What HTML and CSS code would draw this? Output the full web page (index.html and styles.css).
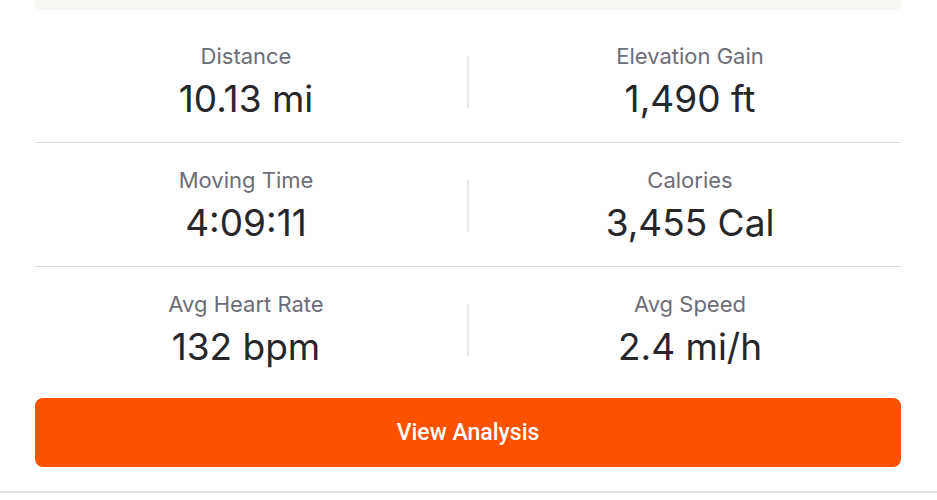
FILE: index.html
```html
<!DOCTYPE html>
<html>
<head>
<meta charset="utf-8">
<link rel="stylesheet" href="styles.css">
</head>
<body>
<div class="card">
  <div class="top-panel"></div>
  <div class="stats">
    <div class="row first">
      <div class="stat"><div class="label">Distance</div><div class="value">10.13 mi</div></div>
      <div class="divider"></div>
      <div class="stat"><div class="label">Elevation Gain</div><div class="value">1,490 ft</div></div>
    </div>
    <div class="row">
      <div class="stat"><div class="label">Moving Time</div><div class="value">4:09:11</div></div>
      <div class="divider"></div>
      <div class="stat"><div class="label">Calories</div><div class="value">3,455 Cal</div></div>
    </div>
    <div class="row last">
      <div class="stat"><div class="label">Avg Heart Rate</div><div class="value">132 bpm</div></div>
      <div class="divider"></div>
      <div class="stat"><div class="label">Avg Speed</div><div class="value">2.4 mi/h</div></div>
    </div>
  </div>
  <button class="btn">View Analysis</button>
</div>
<div class="bottom-line"></div>
</body>
</html>
```
FILE: styles.css
```css
html, body {
  margin: 0;
  padding: 0;
  background: #ffffff;
}
body {
  font-family: Inter, "Noto Sans", sans-serif;
  width: 937px;
  height: 500px;
  overflow: hidden;
}
.card {
  padding: 0 36px 0 35px;
  display: flex;
  flex-direction: column;
}
.top-panel {
  height: 10px;
  background: #f7f6f3;
  border-radius: 0 0 6px 6px;
}
.stats {
  display: flex;
  flex-direction: column;
  padding-top: 9px;
}
.row {
  display: grid;
  grid-template-columns: 1fr 2px 1fr;
  column-gap: 10px;
  align-items: center;
  padding: 24px 0 21px;
  border-bottom: 1px solid #dfdfe8;
}
.row.last {
  border-bottom: none;
}
.stat {
  display: flex;
  flex-direction: column;
  align-items: center;
  gap: 8px;
}
.label {
  font-size: 22px;
  line-height: 26px;
  color: #6d6d78;
  font-weight: 400;
}
.value {
  font-size: 37px;
  line-height: 44px;
  color: #26262b;
  font-weight: 400;
}
.divider {
  width: 2px;
  height: 52px;
  background: #e8e8ec;
}
.btn {
  margin-top: 8px;
  height: 69px;
  border: none;
  border-radius: 8px;
  background: #fc5200;
  color: #ffffff;
  font-family: Roboto, Inter, sans-serif;
  font-weight: 500;
  font-size: 23px;
}
.bottom-line {
  margin-top: 24px;
  height: 2px;
  background: #e6e6e6;
}
```
